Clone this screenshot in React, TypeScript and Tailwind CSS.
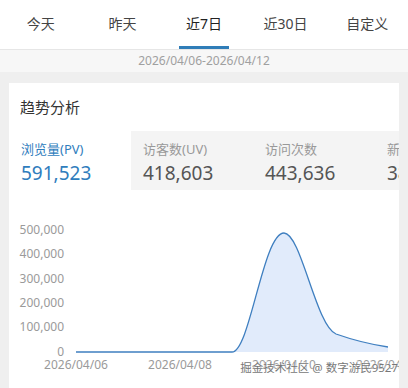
import React, { useState } from "react";

const ranges = ["今天", "昨天", "近7日", "近30日", "自定义"];

const metrics = [
  { label: "浏览量(PV)", value: "591,523" },
  { label: "访客数(UV)", value: "418,603" },
  { label: "访问次数", value: "443,636" },
  { label: "新访客数", value: "382,117" },
];

const yTicks = ["500,000", "400,000", "300,000", "200,000", "100,000", "0"];
const xTicks = [
  { x: 76, label: "2026/04/06" },
  { x: 180, label: "2026/04/08" },
  { x: 284, label: "2026/04/10" },
  { x: 388, label: "2026/04/12" },
];

// chart coordinates are page pixels, viewBox starts at the card corner
const linePath =
  "M76,352 L232,352 C250,352 263,233 284,233 C301,233 316,326 336,334 C353,340 368,344 388,347";
const areaPath = linePath + " L388,352 L76,352 Z";

function TrendChart() {
  return (
    <svg width="390" height="198" viewBox="9 190 390 198" className="block">
      {yTicks.map((t, i) => (
        <text
          key={t}
          x="64"
          y={234 + i * 24.3}
          textAnchor="end"
          fontSize="12"
          fill="#9a9a9a"
          fontFamily="'Noto Sans', sans-serif"
        >
          {t}
        </text>
      ))}
      <path d={areaPath} fill="#e1ebfb" />
      <path d={linePath} fill="none" stroke="#3f7fc0" strokeWidth="1.3" />
      {xTicks.map((t) => (
        <text
          key={t.label}
          x={t.x}
          y="369"
          textAnchor="middle"
          fontSize="12"
          fill="#9a9a9a"
          fontFamily="'Noto Sans', sans-serif"
        >
          {t.label}
        </text>
      ))}
    </svg>
  );
}

export default function App() {
  const [range, setRange] = useState(2);
  const [metric, setMetric] = useState(0);

  return (
    <div className="relative w-[408px] h-[388px] overflow-hidden bg-[#efefef] font-['Noto_Sans','Noto_Sans_CJK_SC',sans-serif]">
      <div className="flex h-[49px] bg-white">
        {ranges.map((r, i) => (
          <button
            key={r}
            onClick={() => setRange(i)}
            className={`relative flex-1 pb-[3px] text-[14px] ${i === range ? "text-[#222]" : "text-[#444]"}`}
          >
            {r}
            {i === range && (
              <span className="absolute bottom-0 left-1/2 -translate-x-1/2 h-[3px] w-[50px] bg-[#2f7db8]" />
            )}
          </button>
        ))}
      </div>
      <div className="h-[23px] border-t border-[#e6e6e6] bg-[#f7f7f7] flex items-center justify-center text-[12px] text-[#a0a0a0]">
        2026/04/06-2026/04/12
      </div>

      <div className="mt-[11px] ml-[9px] w-[390px] bg-white overflow-hidden">
        <div className="h-[48px] flex items-center px-[11px] text-[15px] text-[#333] font-['Noto_Sans_CJK_SC',sans-serif]">
          趋势分析
        </div>
        <div className="flex h-[59px] overflow-hidden">
          {metrics.map((m, i) => (
            <div
              key={m.label}
              onClick={() => setMetric(i)}
              className={`w-[122px] shrink-0 pl-[12px] pt-[9px] ${i === metric ? "bg-white" : "bg-[#f4f4f4]"}`}
            >
              <div
                className={`text-[13px] leading-[18px] ${i === metric ? "text-[#2f7dbd]" : "text-[#999]"}`}
              >
                {m.label}
              </div>
              <div
                className={`mt-[2px] text-[19px] leading-[26px] ${i === metric ? "text-[#2f7dbd]" : "text-[#555]"}`}
              >
                {m.value}
              </div>
            </div>
          ))}
        </div>
        <TrendChart />
      </div>

      <div className="absolute right-[10px] bottom-[12px] text-[11.5px] text-[#777] [text-shadow:0_0_2px_#fff,0_0_2px_#fff]">
        掘金技术社区 @ 数字游民9527
      </div>
    </div>
  );
}
